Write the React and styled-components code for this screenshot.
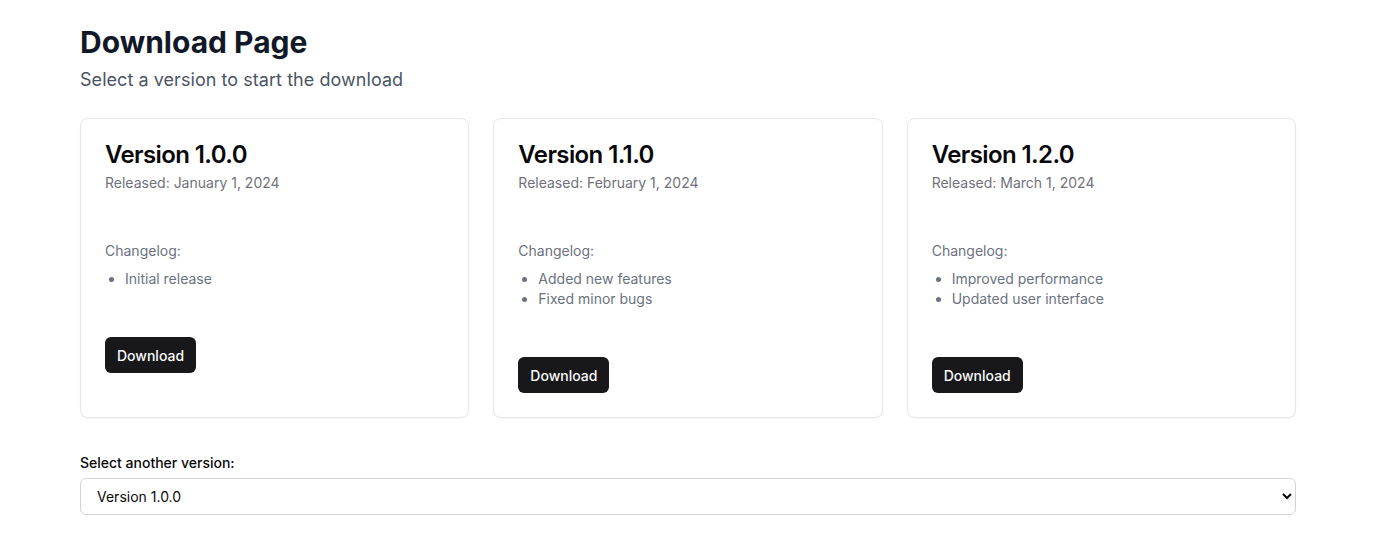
import React, { useState } from 'react';
import styled, { createGlobalStyle } from 'styled-components';

const versions = [
  {
    name: 'Version 1.0.0',
    released: 'January 1, 2024',
    changes: ['Initial release'],
  },
  {
    name: 'Version 1.1.0',
    released: 'February 1, 2024',
    changes: ['Added new features', 'Fixed minor bugs'],
  },
  {
    name: 'Version 1.2.0',
    released: 'March 1, 2024',
    changes: ['Improved performance', 'Updated user interface'],
  },
];

function App() {
  const [selected, setSelected] = useState(versions[0].name);

  return (
    <>
      <GlobalStyle />
      <Page>
        <Title>Download Page</Title>
        <Subtitle>Select a version to start the download</Subtitle>
        <CardGrid>
          {versions.map((v) => (
            <Card key={v.name}>
              <CardHeader>
                <CardTitle>{v.name}</CardTitle>
                <CardDescription>Released: {v.released}</CardDescription>
              </CardHeader>
              <CardContent>
                <ChangelogLabel>Changelog:</ChangelogLabel>
                <ChangeList>
                  {v.changes.map((c) => (
                    <li key={c}>{c}</li>
                  ))}
                </ChangeList>
              </CardContent>
              <CardFooter>
                <DownloadButton>Download</DownloadButton>
              </CardFooter>
            </Card>
          ))}
        </CardGrid>
        <SelectSection>
          <Label htmlFor="version-select">Select another version:</Label>
          <Select
            id="version-select"
            value={selected}
            onChange={(e) => setSelected(e.target.value)}
          >
            {versions.map((v) => (
              <option key={v.name} value={v.name}>
                {v.name}
              </option>
            ))}
          </Select>
        </SelectSection>
      </Page>
    </>
  );
}

export default App;

const GlobalStyle = createGlobalStyle`
  body {
    margin: 0;
    background: #ffffff;
    font-family: Inter, "Noto Sans", sans-serif;
  }
  * {
    box-sizing: border-box;
  }
`;

const Page = styled.div`
  max-width: 1280px;
  margin: 0 auto;
  padding: 24px 32px;
`;

const Title = styled.h1`
  margin: 0;
  font-size: 30px;
  line-height: 36px;
  font-weight: 700;
  color: #111827;
`;

const Subtitle = styled.p`
  margin: 6px 0 24px;
  font-size: 18px;
  line-height: 28px;
  letter-spacing: 0.05px;
  color: #4b5563;
`;

const CardGrid = styled.div`
  display: grid;
  grid-template-columns: repeat(3, 1fr);
  gap: 24px;
`;

const Card = styled.div`
  border: 1px solid #e5e7eb;
  border-radius: 8px;
  background: #fff;
  box-shadow: 0 1px 2px rgba(0, 0, 0, 0.04);
`;

const CardHeader = styled.div`
  display: flex;
  flex-direction: column;
  gap: 6px;
  padding: 24px;
`;

const CardTitle = styled.h3`
  margin: 0;
  font-size: 24px;
  line-height: 24px;
  font-weight: 600;
  letter-spacing: -0.6px;
  color: #09090b;
`;

const CardDescription = styled.p`
  margin: 0;
  font-size: 14px;
  line-height: 20px;
  color: #71717a;
`;

const CardContent = styled.div`
  padding: 24px;
`;

const ChangelogLabel = styled.p`
  margin: 0;
  font-size: 14px;
  line-height: 20px;
  color: #6b7280;
`;

const ChangeList = styled.ul`
  margin: 8px 0 0;
  padding-left: 20px;
  list-style: disc;
  font-size: 14px;
  line-height: 20px;
  color: #6b7280;
`;

const CardFooter = styled.div`
  display: flex;
  align-items: center;
  padding: 24px;
`;

const DownloadButton = styled.button`
  height: 36px;
  padding: 0 12px;
  border: none;
  border-radius: 6px;
  background: #18181b;
  color: #fafafa;
  font-family: Inter, sans-serif;
  font-size: 14px;
  font-weight: 500;
  cursor: pointer;
`;

const SelectSection = styled.div`
  margin-top: 35px;
`;

const Label = styled.label`
  display: block;
  margin-bottom: 5px;
  font-size: 14px;
  line-height: 20px;
  font-weight: 500;
  color: #09090b;
`;

const Select = styled.select`
  display: block;
  width: 100%;
  height: 37px;
  padding: 0 8px 0 12px;
  border: 1px solid #d4d4d8;
  border-radius: 6px;
  background: #fff;
  font-family: Inter, sans-serif;
  font-size: 14px;
  color: #09090b;
`;
